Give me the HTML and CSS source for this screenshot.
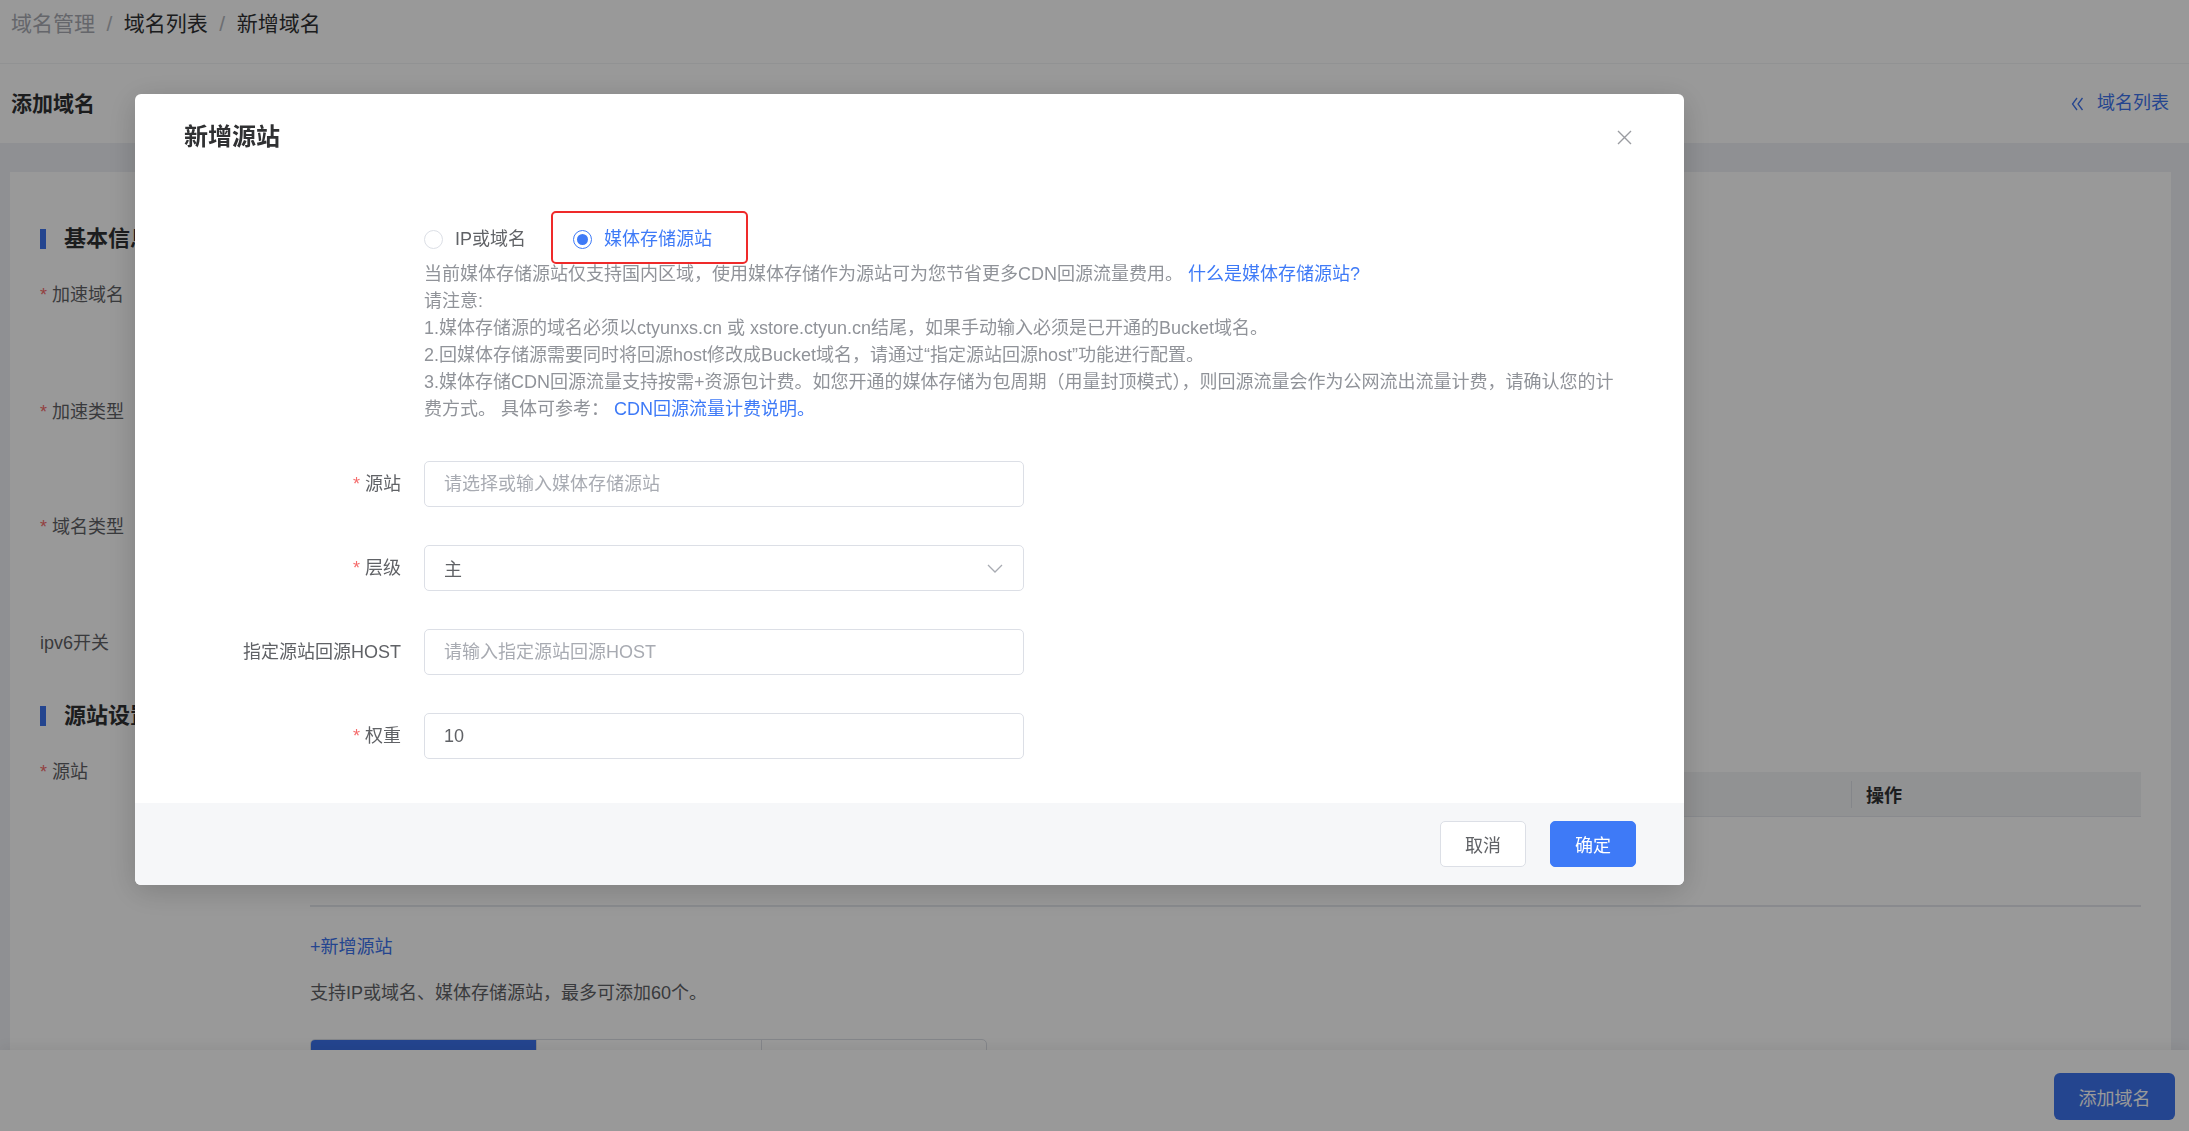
FILE: index.html
```html
<!DOCTYPE html>
<html lang="zh-CN">
<head>
<meta charset="utf-8">
<title>新增源站</title>
<link rel="stylesheet" href="styles.css">
</head>
<body>
<div class="page">
  <div class="breadcrumb">
    <span class="crumb crumb-muted">域名管理</span>
    <span class="crumb-sep">/</span>
    <span class="crumb">域名列表</span>
    <span class="crumb-sep">/</span>
    <span class="crumb">新增域名</span>
  </div>
  <div class="page-header">
    <h1 class="page-title">添加域名</h1>
    <a class="back-link">
      <svg class="back-icon" viewBox="0 0 14 16" width="14" height="16"><path d="M7 2L2.5 8 7 14M12.5 2L8 8l4.5 6"/></svg>
      <span>域名列表</span>
    </a>
  </div>
  <div class="content">
    <div class="card">
      <div class="section-title">基本信息</div>
      <div class="form-row row-domain"><div class="row-label"><span class="req">*</span>加速域名</div></div>
      <div class="form-row row-accel"><div class="row-label"><span class="req">*</span>加速类型</div></div>
      <div class="form-row row-type"><div class="row-label"><span class="req">*</span>域名类型</div></div>
      <div class="form-row row-ipv6"><div class="row-label">ipv6开关</div></div>
      <div class="section-title">源站设置</div>
      <div class="form-row row-origin">
        <div class="row-label"><span class="req">*</span>源站</div>
        <div class="row-content">
          <div class="table">
            <div class="table-head">
              <div class="th th-main"></div>
              <div class="th th-op">操作</div>
            </div>
            <div class="table-body"></div>
          </div>
          <a class="add-origin">+新增源站</a>
          <div class="hint">支持IP或域名、媒体存储源站，最多可添加60个。</div>
          <div class="tabs">
            <div class="tab tab-active"></div>
            <div class="tab"></div>
            <div class="tab"></div>
          </div>
        </div>
      </div>
    </div>
  </div>
  <div class="bottom-bar">
    <button class="btn-submit">添加域名</button>
  </div>
</div>

<div class="mask"></div>

<div class="dialog">
  <div class="dialog-header">
    <h2 class="dialog-title">新增源站</h2>
    <button class="dialog-close"><svg viewBox="0 0 15 15" width="15" height="15"><path d="M1 1L14 14M14 1L1 14"/></svg></button>
  </div>
  <div class="dialog-body">
    <div class="radio-group">
      <label class="radio"><span class="radio-dot"></span><span class="radio-text">IP或域名</span></label>
      <label class="radio radio-checked"><span class="radio-dot"></span><span class="radio-text">媒体存储源站</span></label>
      <span class="annotation"></span>
    </div>
    <div class="notice">
      <p>当前媒体存储源站仅支持国内区域，使用媒体存储作为源站可为您节省更多CDN回源流量费用。 <a class="link">什么是媒体存储源站?</a></p>
      <p>请注意:</p>
      <p>1.媒体存储源的域名必须以ctyunxs.cn 或 xstore.ctyun.cn结尾，如果手动输入必须是已开通的Bucket域名。</p>
      <p>2.回媒体存储源需要同时将回源host修改成Bucket域名，请通过“指定源站回源host”功能进行配置。</p>
      <p>3.媒体存储CDN回源流量支持按需+资源包计费。如您开通的媒体存储为包周期（用量封顶模式），则回源流量会作为公网流出流量计费，请确认您的计<br>费方式。 具体可参考： <a class="link">CDN回源流量计费说明。</a></p>
    </div>
    <div class="form-item">
      <label class="form-label"><span class="req">*</span>源站</label>
      <input class="input" type="text" placeholder="请选择或输入媒体存储源站">
    </div>
    <div class="form-item">
      <label class="form-label"><span class="req">*</span>层级</label>
      <div class="input select">
        <span class="select-value">主</span>
        <svg class="select-arrow" viewBox="0 0 16 9" width="16" height="9"><path d="M1 1l7 7 7-7"/></svg>
      </div>
    </div>
    <div class="form-item">
      <label class="form-label">指定源站回源HOST</label>
      <input class="input" type="text" placeholder="请输入指定源站回源HOST">
    </div>
    <div class="form-item">
      <label class="form-label"><span class="req">*</span>权重</label>
      <input class="input" type="text" value="10">
    </div>
  </div>
  <div class="dialog-footer">
    <button class="btn btn-default">取消</button>
    <button class="btn btn-primary">确定</button>
  </div>
</div>
</body>
</html>
```

FILE: styles.css
```css
* { box-sizing: border-box; }
html, body { margin: 0; padding: 0; height: 100%; }
body {
  font-family: "Liberation Sans", "Noto Sans CJK SC", sans-serif;
  font-size: 18px;
  color: #606266;
  background: #eef0f5;
  overflow: hidden;
}
a { text-decoration: none; cursor: pointer; }
button { font-family: inherit; cursor: pointer; }

.page { height: 1131px; display: flex; flex-direction: column; }

/* breadcrumb */
.breadcrumb {
  height: 63px;
  flex: none;
  background: #fff;
  padding: 9px 11px 0;
  font-size: 21px;
  line-height: 30px;
  display: flex;
}
.crumb { color: #303133; }
.crumb-muted { color: #a8abb2; }
.crumb-sep { color: #b4b7bd; margin: 0 11.5px; }

/* header */
.page-header {
  height: 80px;
  flex: none;
  background: #fff;
  border-top: 1px solid #f2f3f5;
  display: flex;
  align-items: center;
  justify-content: space-between;
  padding: 0 20px 0 11px;
}
.page-title { margin: 0; font-size: 21px; font-weight: 700; color: #303133; line-height: 30px; }
.back-link { display: flex; align-items: center; gap: 13px; color: #3d73ee; font-size: 18px; line-height: 27px; }
.back-icon { display: block; fill: none; stroke: #3d73ee; stroke-width: 1.3; margin-top: 1px; }

/* content card */
.content { flex: 1; padding: 29px 18px 0 10px; min-height: 0; }
.card { background: #fff; height: 100%; padding: 53px 30px 0 30px; }
.section-title {
  display: flex;
  align-items: center;
  font-size: 22px;
  font-weight: 700;
  color: #303133;
  line-height: 27px;
}
.section-title::before {
  content: "";
  width: 6px;
  height: 20px;
  background: #3c73ee;
  margin-right: 18px;
}
.form-row { display: flex; }
.row-label { width: 270px; flex: none; line-height: 27px; color: #606266; }
.req { color: #f56c6c; margin-right: 5px; }
.row-domain { margin-top: 30px; height: 117px; }
.row-accel { height: 115px; }
.row-type { height: 116px; }
.row-ipv6 { height: 72px; }
.row-origin { margin-top: 30px; }
.row-content { flex: 1; display: flex; flex-direction: column; align-items: flex-start; }

.table { width: 100%; margin-top: 13px; }
.table-head {
  height: 45px;
  background: #f2f3f5;
  border-bottom: 1px solid #e4e7ed;
  display: flex;
}
.th-main { flex: 1; }
.th-op {
  width: 290px;
  display: flex;
  align-items: center;
  font-weight: 700;
  color: #303133;
}
.th-op::before {
  content: "";
  width: 1px;
  height: 27px;
  background: #dcdfe6;
  margin-right: 14px;
}
.table-body { height: 90px; border-bottom: 2px solid #e4e7ed; }
.add-origin { margin-top: 27px; line-height: 27px; color: #3d73ee; }
.hint { margin-top: 19px; line-height: 27px; color: #606266; }
.tabs {
  margin-top: 32px;
  display: flex;
  border: 1px solid #dcdfe6;
  border-radius: 5px 5px 0 0;
  overflow: hidden;
}
.tab { width: 225px; height: 46px; border-left: 1px solid #dcdfe6; }
.tab:first-child { border-left: none; }
.tab-active { background: #3c73ee; }

/* bottom bar */
.bottom-bar {
  position: fixed;
  left: 0; right: 0; bottom: 0;
  height: 81px;
  background: #fff;
  box-shadow: 0 -3px 12px rgba(0, 0, 0, 0.06);
  display: flex;
  justify-content: flex-end;
  align-items: flex-start;
  padding: 23px 14px 0 0;
}
.btn-submit {
  width: 121px;
  height: 47px;
  border: none;
  border-radius: 6px;
  background: #3c73ee;
  color: #fff;
  font-size: 18px;
}

/* mask */
.mask { position: fixed; inset: 0; background: rgba(0, 0, 0, 0.4); }

/* dialog */
.dialog {
  position: fixed;
  left: 135px;
  top: 94px;
  width: 1549px;
  background: #fff;
  border-radius: 6px;
  box-shadow: 0 6px 30px rgba(0, 0, 0, 0.18);
  overflow: hidden;
}
.dialog-header { position: relative; padding: 27px 49px 0; }
.dialog-title { margin: 0; font-size: 24px; font-weight: 700; color: #303133; line-height: 32px; }
.dialog-close {
  position: absolute;
  top: 36px;
  right: 52px;
  width: 15px;
  height: 15px;
  padding: 0;
  border: none;
  background: none;
  display: block;
}
.dialog-close svg { display: block; fill: none; stroke: #9a9ca1; stroke-width: 1.4; }
.dialog-body { padding: 73px 49px 44px; }

.radio-group {
  position: relative;
  margin-left: 240px;
  height: 27px;
  display: flex;
  align-items: center;
}
.radio { display: flex; align-items: center; gap: 12px; line-height: 27px; color: #606266; }
.radio + .radio { margin-left: 47px; }
.radio-dot {
  width: 19px;
  height: 19px;
  border: 1px solid #dcdfe6;
  border-radius: 50%;
  background: #fff;
  display: flex;
  align-items: center;
  justify-content: center;
}
.radio-checked .radio-text { color: #3e7af7; }
.radio-checked .radio-dot { border: 1.5px solid #3e7af7; }
.radio-checked .radio-dot::after {
  content: "";
  width: 11px;
  height: 11px;
  border-radius: 50%;
  background: #3e7af7;
}
.annotation {
  position: absolute;
  left: 127px;
  top: -15px;
  width: 197px;
  height: 53px;
  border: 2px solid #ef2a2a;
  border-radius: 5px;
  pointer-events: none;
}

.notice {
  margin: 8px 0 0 240px;
  line-height: 27px;
  color: #909399;
  white-space: nowrap;
}
.notice p { margin: 0; }
.link { color: #3e7af7; }

.form-item { display: flex; align-items: center; margin-top: 38px; height: 46px; }
.form-label {
  width: 240px;
  flex: none;
  text-align: right;
  padding-right: 23px;
  line-height: 46px;
  color: #606266;
}
.input {
  width: 600px;
  height: 46px;
  border: 1px solid #dcdfe6;
  border-radius: 5px;
  padding: 0 19px;
  font-family: inherit;
  font-size: 18px;
  color: #606266;
  background: #fff;
  outline: none;
}
.input::placeholder { color: #a8abb2; }
.select { display: flex; align-items: center; justify-content: space-between; padding-right: 20px; }
.select-value { color: #606266; }
.select-arrow { display: block; fill: none; stroke: #a8abb2; stroke-width: 1.3; }

.dialog-footer {
  background: #f6f7f9;
  padding: 18px 48px;
  display: flex;
  justify-content: flex-end;
  gap: 24px;
}
.btn {
  height: 46px;
  padding: 0 24px;
  font-size: 18px;
  border-radius: 5px;
}
.btn-default { background: #fff; border: 1px solid #dcdfe6; color: #606266; }
.btn-primary { background: #3e7af7; border: 1px solid #3e7af7; color: #fff; }
```
